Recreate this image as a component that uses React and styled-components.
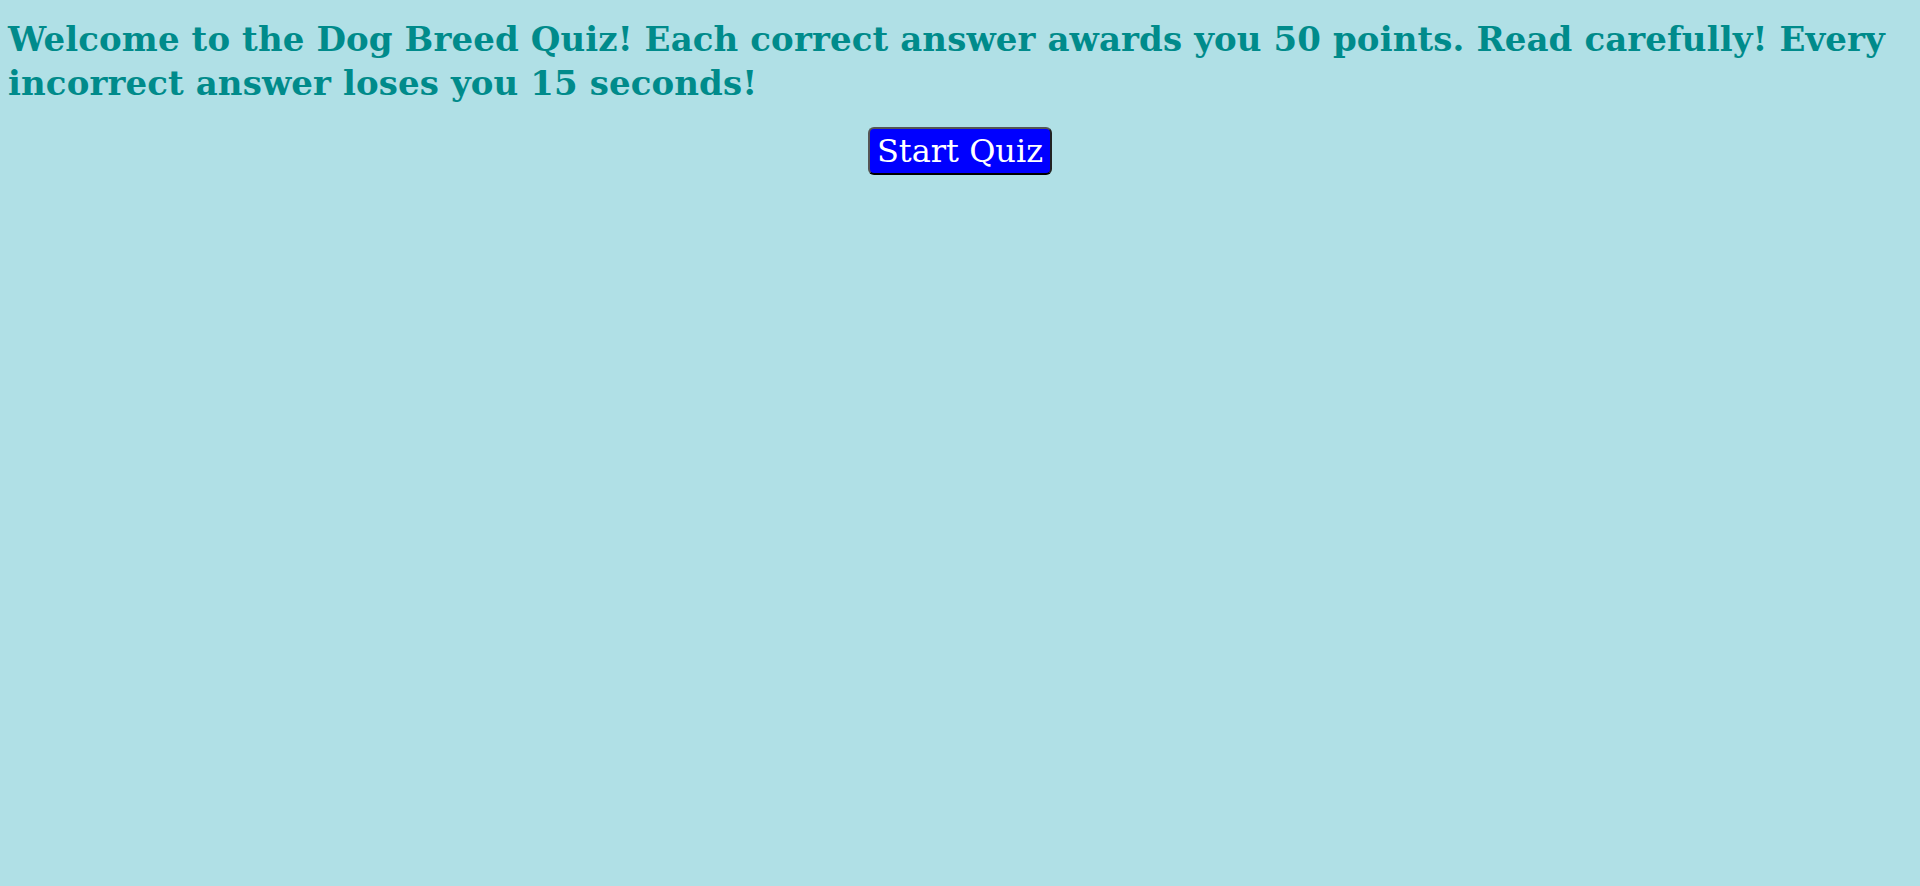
import React from "react";
import styled, { createGlobalStyle } from "styled-components";

const GlobalStyle = createGlobalStyle`
  html, body {
    margin: 0;
    padding: 0;
    background: #b0e0e6;
  }
  body {
    min-height: 886px;
    font-family: "DejaVu Serif", "Liberation Serif", serif;
  }
`;

const Page = styled.main`
  padding: 0 8px;
  display: flex;
  flex-direction: column;
`;

const Title = styled.h1`
  margin: 17px 0 0;
  font-family: "DejaVu Serif", "Liberation Serif", serif;
  font-weight: bold;
  font-size: 34px;
  line-height: 44px;
  color: #008b8b;
  letter-spacing: 0.1px;
`;

const Actions = styled.div`
  display: flex;
  justify-content: center;
  margin-top: 22px;
`;

const StartButton = styled.button`
  font-family: "DejaVu Serif", "Liberation Serif", serif;
  font-size: 32px;
  line-height: 44px;
  padding: 0 7px;
  color: #ffffff;
  background: #0000ff;
  border-width: 2px;
  border-style: solid;
  border-color: #555555 #222222 #000000 #555555;
  border-radius: 6px;
  cursor: pointer;
`;

export default function App() {
  return (
    <>
      <GlobalStyle />
      <Page>
        <Title>
          Welcome to the Dog Breed Quiz! Each correct answer awards you 50 points. Read carefully! Every
          incorrect answer loses you 15 seconds!
        </Title>
        <Actions>
          <StartButton type="button">Start Quiz</StartButton>
        </Actions>
      </Page>
    </>
  );
}
